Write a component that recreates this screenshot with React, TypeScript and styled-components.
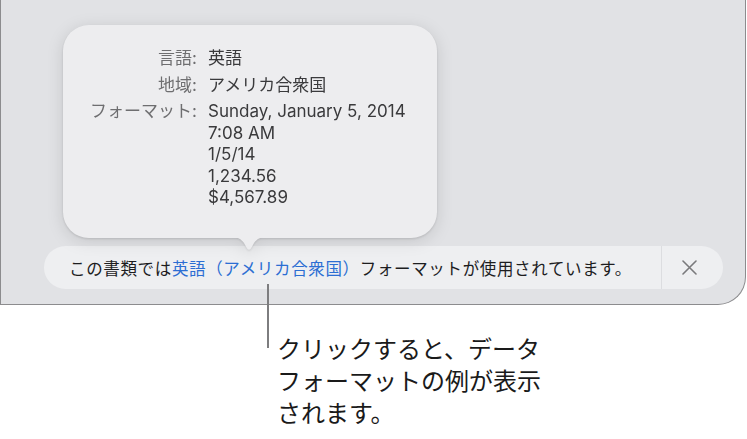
import styled, { createGlobalStyle } from "styled-components";

const GlobalStyle = createGlobalStyle`
  html, body {
    margin: 0;
    padding: 0;
    background: #ffffff;
  }
  body {
    font-family: Inter, "Noto Sans CJK JP", sans-serif;
    -webkit-font-smoothing: antialiased;
  }
`;

const Page = styled.div`
  width: 747px;
  height: 439px;
  overflow: hidden;
  background: #ffffff;
`;

const Window = styled.div`
  box-sizing: border-box;
  width: 746px;
  height: 305px;
  background: #e1e2e5;
  border: 1.5px solid #8c8c8e;
  border-top: none;
  border-bottom-right-radius: 28px;
  display: flex;
  flex-direction: column;
  align-items: flex-start;
  padding: 25px 0 0 43px;
`;

const Popover = styled.div`
  position: relative;
  box-sizing: border-box;
  margin-left: 19px;
  width: 374px;
  height: 213px;
  background: #ededef;
  border-radius: 26px;
  filter: drop-shadow(0 1px 1px rgba(0, 0, 0, 0.12)) drop-shadow(0 3px 8px rgba(0, 0, 0, 0.12));
  padding-top: 23px;
`;

const Arrow = styled.svg`
  position: absolute;
  left: 168px;
  top: 212px;
  width: 36px;
  height: 16px;
`;

const InfoGrid = styled.dl`
  margin: 0;
  display: grid;
  grid-template-columns: 134px auto;
  column-gap: 11px;
  row-gap: 5px;
  font-size: 17px;
  line-height: 21.5px;
`;

const Label = styled.dt`
  text-align: right;
  color: #6e6e70;
`;

const Value = styled.dd`
  margin: 0;
  color: #3a3a3c;
`;

const Bar = styled.div`
  box-sizing: border-box;
  margin-top: 8px;
  width: 679px;
  height: 43px;
  border-radius: 22px;
  background: #eeeff1;
  display: flex;
  align-items: center;
`;

const Message = styled.div`
  flex: 1;
  padding-left: 25px;
  font-size: 16.5px;
  color: #1d1d1f;
  white-space: nowrap;
  letter-spacing: 0.65px;
`;

const LinkText = styled.span`
  color: #2c6ed3;
`;

const Divider = styled.div`
  width: 1.5px;
  align-self: stretch;
  background: #dcdde0;
`;

const CloseButton = styled.button`
  width: 61px;
  height: 100%;
  border: none;
  background: transparent;
  display: flex;
  align-items: center;
  justify-content: center;
  padding: 0 6px 0 0;
`;

const Callout = styled.div`
  display: flex;
  align-items: flex-start;
  margin-left: 267px;
`;

const Leader = styled.div`
  position: relative;
  z-index: 1;
  margin-top: -21px;
  width: 2px;
  height: 64px;
  background: #7d7d7f;
`;

const CalloutText = styled.p`
  margin: 27px 0 0 8px;
  font-family: "Noto Sans CJK JP", sans-serif;
  font-size: 24px;
  line-height: 32px;
  color: #1a1a1a;
`;

const rows: { label: string; values: string[] }[] = [
  { label: "言語:", values: ["英語"] },
  { label: "地域:", values: ["アメリカ合衆国"] },
  {
    label: "フォーマット:",
    values: ["Sunday, January 5, 2014", "7:08 AM", "1/5/14", "1,234.56", "$4,567.89"],
  },
];

const App = () => {
  return (
    <Page>
      <GlobalStyle />
      <Window>
        <Popover>
          <InfoGrid>
            {rows.map((row) => (
              <>
                <Label key={row.label}>{row.label}</Label>
                <Value key={row.label + "v"}>
                  {row.values.map((v) => (
                    <div key={v}>{v}</div>
                  ))}
                </Value>
              </>
            ))}
          </InfoGrid>
          <Arrow viewBox="0 0 36 16">
            <path
              d="M0 0 C7 0 10 2 13 6 L15.6 10.8 Q18 14.6 20.4 10.8 L23 6 C26 2 29 0 36 0 Z"
              fill="#ededef"
            />
          </Arrow>
        </Popover>
        <Bar>
          <Message>
            この書類では<LinkText>英語（アメリカ合衆国）</LinkText>フォーマットが使用されています。
          </Message>
          <Divider />
          <CloseButton aria-label="閉じる">
            <svg width="15" height="15" viewBox="0 0 15 15">
              <path d="M1 1 L14 14 M14 1 L1 14" stroke="#7a7a7c" strokeWidth="1.6" strokeLinecap="round" />
            </svg>
          </CloseButton>
        </Bar>
      </Window>
      <Callout>
        <Leader />
        <CalloutText>
          クリックすると、データ
          <br />
          フォーマットの例が表示
          <br />
          されます。
        </CalloutText>
      </Callout>
    </Page>
  );
};

export default App;
